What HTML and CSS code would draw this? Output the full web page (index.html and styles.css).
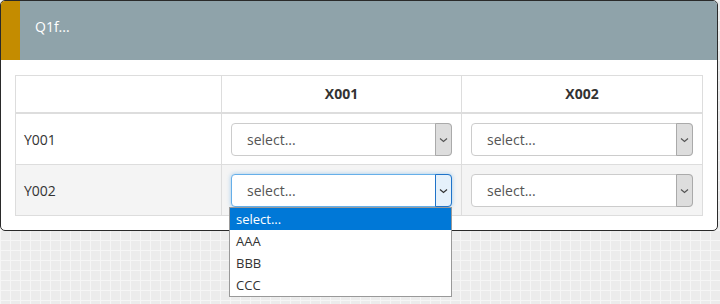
FILE: index.html
```html
<!DOCTYPE html>
<html lang="en">
<head>
  <meta charset="UTF-8">
  <title>Q1f</title>
  <link rel="stylesheet" href="styles.css">
</head>
<body>
  <div class="panel">
    <div class="panel-heading">Q1f...</div>

    <div class="panel-body">
      <table class="grid">
        <thead>
          <tr>
            <th class="row-head"></th>
            <th class="col-x1">X001</th>
            <th>X002</th>
          </tr>
        </thead>
        <tbody>
          <tr>
            <td class="row-head">Y001</td>
            <td>
              <div class="select">
                <span class="select-text">select...</span>
                <span class="select-arrow"><svg width="9" height="6" viewBox="0 0 9 6"><path d="M1 1.5 L4.5 4.5 L8 1.5" fill="none" stroke="#555" stroke-width="1.2"/></svg></span>
              </div>
            </td>
            <td>
              <div class="select">
                <span class="select-text">select...</span>
                <span class="select-arrow"><svg width="9" height="6" viewBox="0 0 9 6"><path d="M1 1.5 L4.5 4.5 L8 1.5" fill="none" stroke="#555" stroke-width="1.2"/></svg></span>
              </div>
            </td>
          </tr>
          <tr class="striped">
            <td class="row-head">Y002</td>
            <td>
              <div class="select focused">
                <span class="select-text">select...</span>
                <span class="select-arrow"><svg width="9" height="6" viewBox="0 0 9 6"><path d="M1 1.5 L4.5 4.5 L8 1.5" fill="none" stroke="#333" stroke-width="1.2"/></svg></span>
              </div>
            </td>
            <td>
              <div class="select">
                <span class="select-text">select...</span>
                <span class="select-arrow"><svg width="9" height="6" viewBox="0 0 9 6"><path d="M1 1.5 L4.5 4.5 L8 1.5" fill="none" stroke="#555" stroke-width="1.2"/></svg></span>
              </div>
            </td>
          </tr>
        </tbody>
      </table>
    </div>
  </div>

  <!-- open option list of the focused select -->
  <ul class="options">
    <li class="active">select...</li>
    <li>AAA</li>
    <li>BBB</li>
    <li>CCC</li>
  </ul>
</body>
</html>
```

FILE: styles.css
```css
body {
  margin: 0;
  font-family: 'Open Sans', 'Liberation Sans', sans-serif;
  font-size: 14px;
  color: #333;
  background-color: #ececec;
  background-image:
    linear-gradient(to right, #f6f6f6 1px, transparent 1px),
    linear-gradient(to bottom, #f6f6f6 1px, transparent 1px);
  background-size: 10px 10px;
  height: 304px;
  position: relative;
}

.panel {
  width: 718px;
  box-sizing: border-box;
  background: white;
  border: 1px solid #2a2a2a;
  border-radius: 5px;
}

.panel-heading {
  height: 59px;
  box-sizing: border-box;
  padding: 16px 15px;
  line-height: 20px;
  background-color: #8fa3aa;
  border-left: 19px solid #c48c00;
  border-radius: 4px 4px 0 0;
  color: #fff;
}

.panel-body {
  padding: 15px 14px 14px;
}

/* Table */
.grid {
  width: 100%;
  table-layout: fixed;
  border-collapse: collapse;
  border: 1px solid #ddd;
}

.grid th,
.grid td {
  border: 1px solid #ddd;
  padding: 9px 9px 8px;
}

.grid th {
  height: 20px;
  line-height: 20px;
  font-weight: bold;
  text-align: center;
  border-bottom-width: 2px;
  padding: 8px 9px;
}

.grid .row-head {
  width: 188px;
  padding-left: 8px;
  text-align: left;
}

.grid .col-x1 {
  width: 221px;
}

.striped td {
  background-color: #f4f4f4;
}

/* Fake select */
.select {
  display: flex;
  height: 33px;
  box-sizing: border-box;
  background: white;
  border: 1px solid #ccc;
  border-radius: 4px;
  color: #555;
}

.select-text {
  flex: 1;
  padding-left: 15px;
  line-height: 31px;
}

.select-arrow {
  width: 17px;
  margin: -1px -1px -1px 0;
  box-sizing: border-box;
  display: flex;
  align-items: center;
  justify-content: center;
  background-color: #ddd;
  border: 1px solid #aaa;
  border-radius: 0 4px 4px 0;
}

.select.focused {
  border-color: #66afe9;
  box-shadow: 0 0 4px rgba(102, 175, 233, 0.6);
}

.select.focused .select-arrow {
  background-color: #e5f1fb;
  border-color: #1f73c9;
}

/* Open option list */
.options {
  position: absolute;
  left: 229px;
  top: 207px;
  width: 223px;
  box-sizing: border-box;
  margin: 0;
  padding: 0;
  list-style: none;
  background: white;
  border: 1px solid #999;
  font-size: 13px;
  color: #333;
}

.options li {
  height: 22px;
  line-height: 22px;
  padding-left: 6px;
}

.options li.active {
  background-color: #0078d7;
  color: white;
}
```
